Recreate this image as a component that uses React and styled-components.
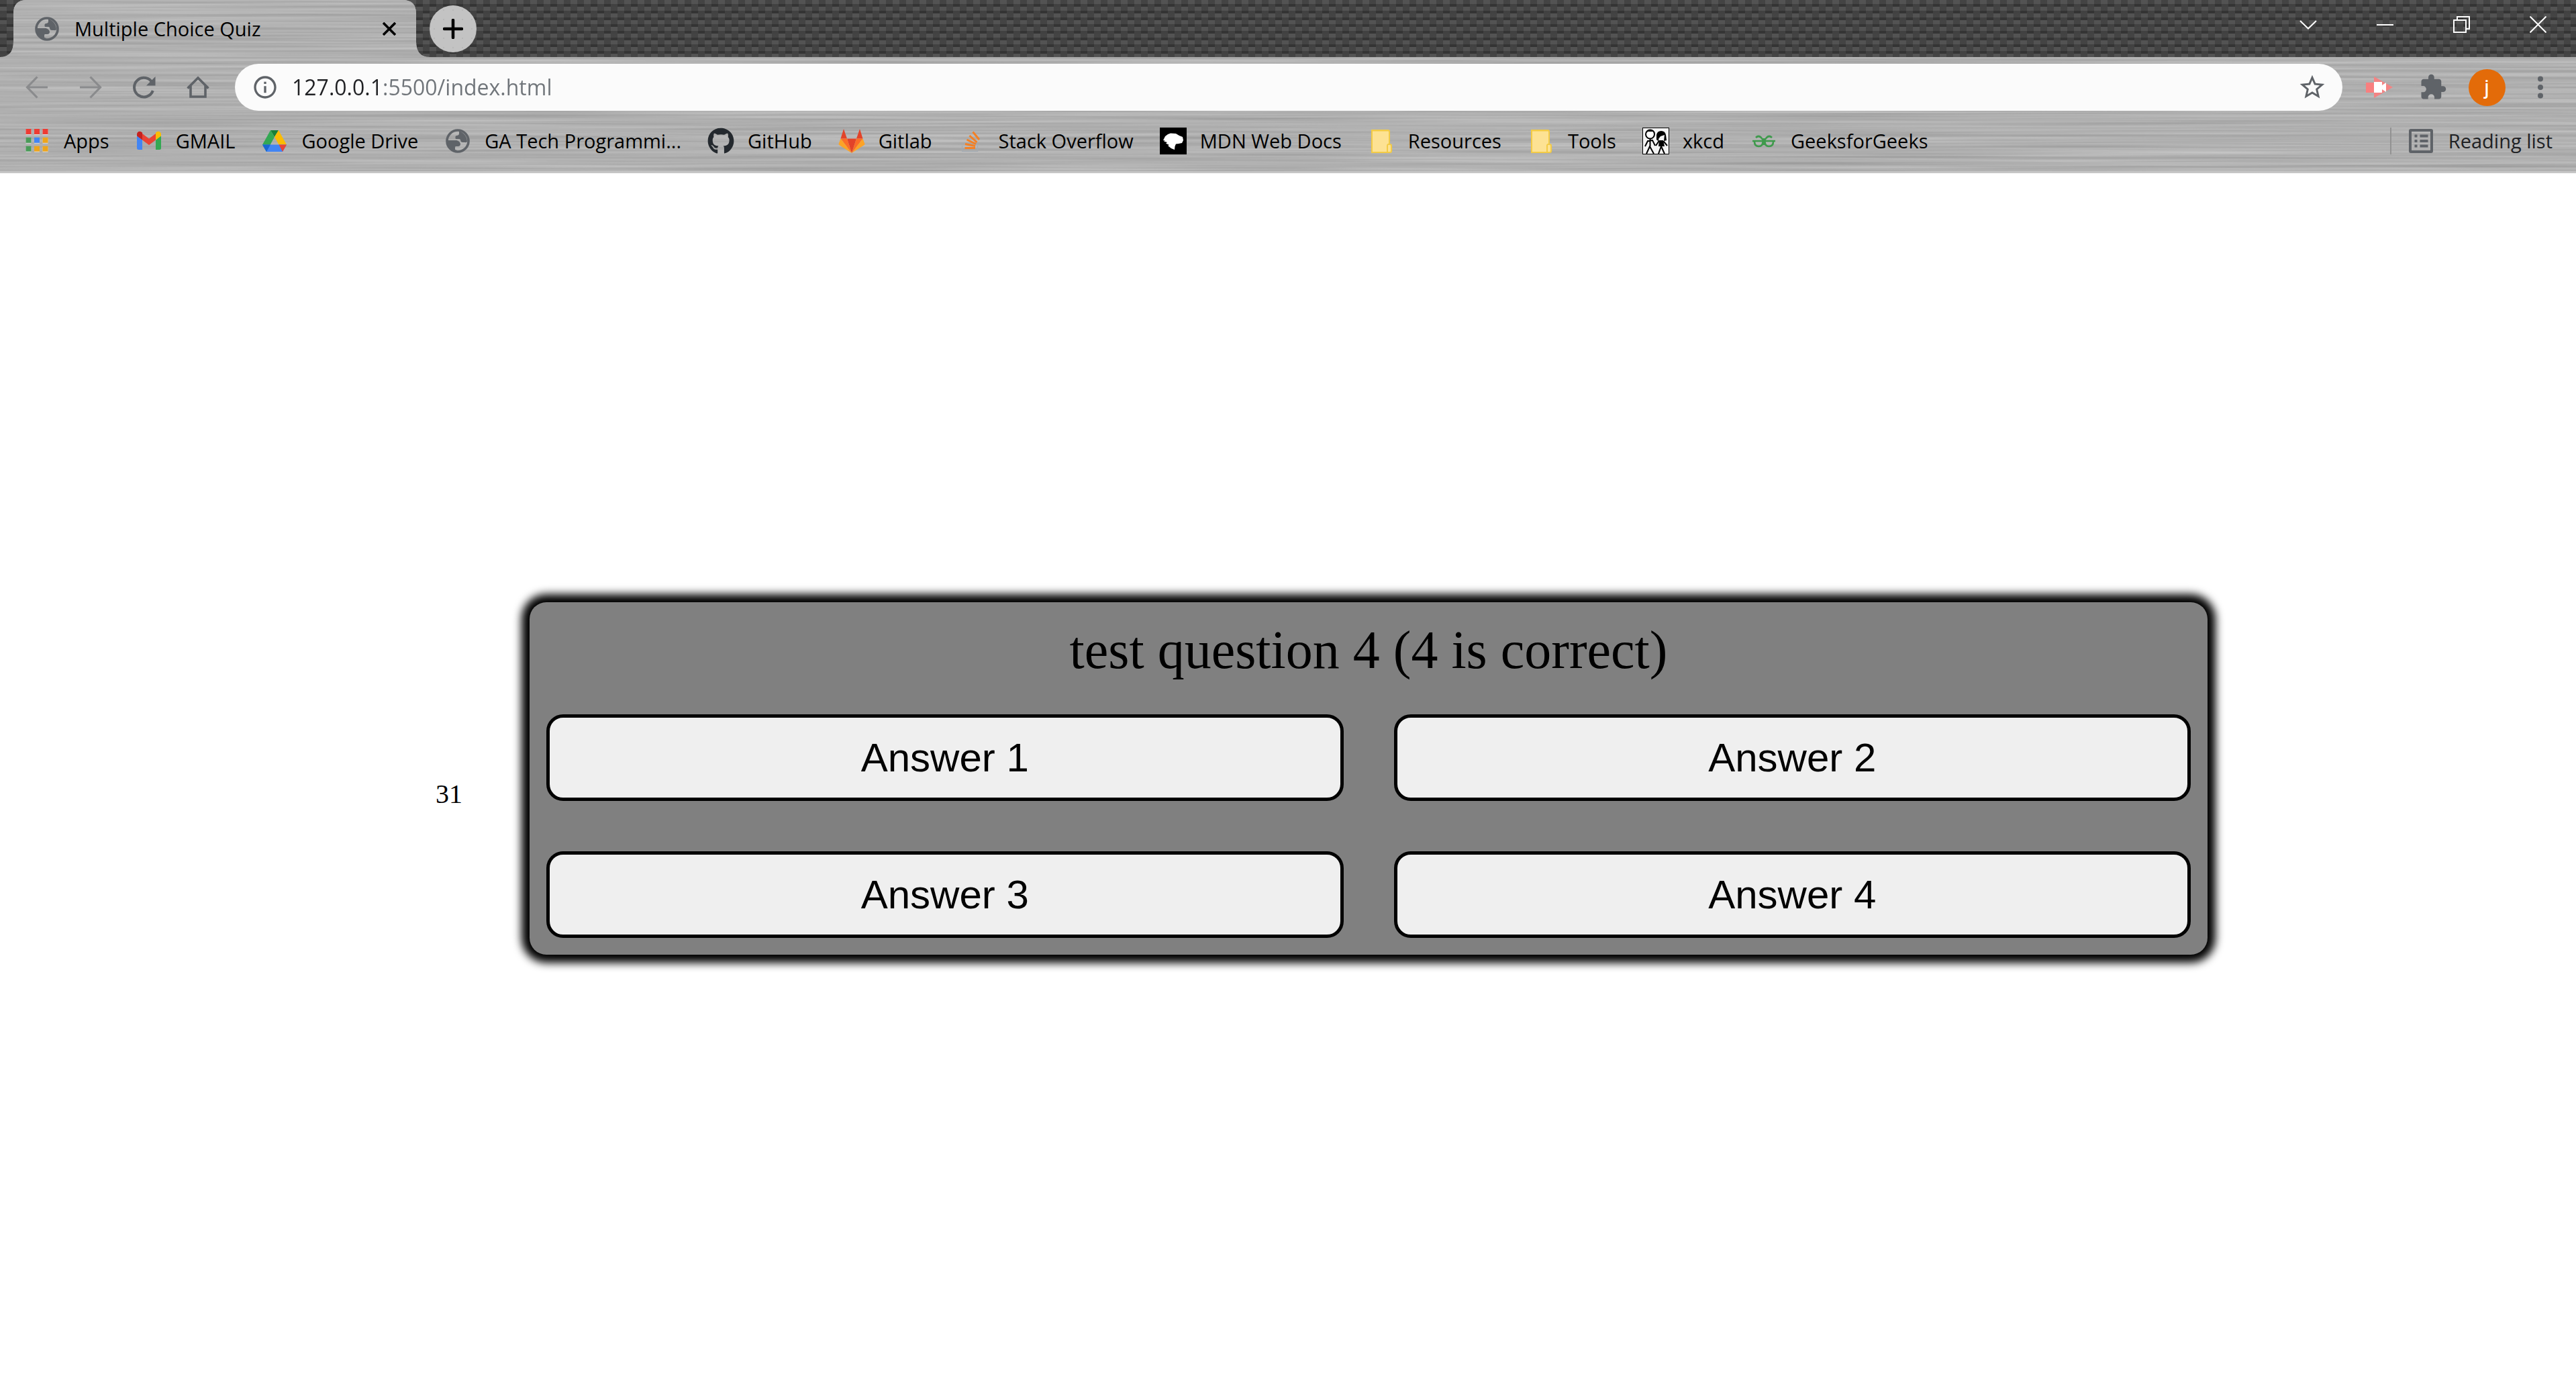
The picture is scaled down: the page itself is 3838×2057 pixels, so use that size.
import React from "react";
import styled, { createGlobalStyle } from "styled-components";
import { FaGithub } from "react-icons/fa";
import { MdExtension, MdStarBorder, MdInfoOutline } from "react-icons/md";

const ui = '"Open Sans", "Noto Sans", sans-serif';
const serif = '"Liberation Serif", "Times New Roman", serif';
const sans = '"Liberation Sans", Arial, sans-serif';

const GlobalStyle = createGlobalStyle`
  * { box-sizing: border-box; }
  body { margin: 0; background: #fff; font-family: ${ui}; }
  svg { display: block; flex: none; }
`;

const Window = styled.div`
  display: flex;
  flex-direction: column;
  min-height: 100vh;
`;

/* ---------- browser chrome ---------- */

const Chrome = styled.header`
  position: relative;
  z-index: 0;
  overflow: hidden;
  background: #aeaeae;
  border-bottom: 3px solid #c6c6c6;
`;

const Metal = styled.svg`
  position: absolute;
  inset: 0;
  width: 100%;
  height: 100%;
  z-index: -1;
`;

const Strip = styled.div`
  display: flex;
  align-items: center;
  height: 85px;
  background:
    repeating-linear-gradient(rgba(255, 255, 255, 0.04) 0 6px, rgba(0, 0, 0, 0.14) 6px 10px),
    repeating-conic-gradient(#4c4c4c 0 25%, #3c3c3c 0 50%) 0 0 / 20px 20px;
`;

const Tab = styled.div`
  position: relative;
  z-index: 0;
  display: flex;
  align-items: center;
  gap: 23px;
  width: 640px;
  height: 85px;
  padding: 0 50px 0 52px;
  background: #aeaeae;
  clip-path: path("M0 85 Q20 85 20 62 V20 Q20 0 40 0 H600 Q620 0 620 20 V62 Q620 85 640 85 Z");
`;

const TabTitle = styled.span`
  flex: 1;
  font-size: 29px;
  line-height: 40px;
  color: #000;
`;

const PlainButton = styled.button`
  display: flex;
  align-items: center;
  justify-content: center;
  padding: 0;
  border: 0;
  background: none;
  color: #5f6368;
`;

const NewTab = styled(PlainButton)`
  width: 70px;
  height: 70px;
  border-radius: 50%;
  background: radial-gradient(#b8b8b8 10%, transparent 16%) 0 0 / 14px 14px #c3c3c3;
`;

const Caption = styled.div`
  display: flex;
  margin-left: auto;
  height: 85px;
  padding-bottom: 12px;
`;

const CaptionButton = styled(PlainButton)`
  width: 114px;
`;

const Toolbar = styled.div`
  display: flex;
  align-items: center;
  padding: 10px 13px 10px 15px;
`;

const ToolButton = styled(PlainButton)`
  width: 80px;
  height: 70px;
`;

const Omnibox = styled.div`
  flex: 1;
  display: flex;
  align-items: center;
  height: 70px;
  margin: 0 15px;
  padding: 0 23px 0 25px;
  border-radius: 35px;
  background: #fbfbfb;
  color: #5f6368;
`;

const Address = styled.input`
  flex: 1;
  min-width: 0;
  margin: 0 20px;
  padding: 0;
  border: 0;
  outline: 0;
  font-family: ${ui};
  font-size: 32px;
  line-height: 48px;
  background: linear-gradient(to right, #202124 134px, #70757a 134px);
  background-clip: text;
  -webkit-text-fill-color: transparent;
`;

const Avatar = styled.span`
  display: flex;
  align-items: center;
  justify-content: center;
  width: 55px;
  height: 55px;
  border-radius: 50%;
  background: #e36b09;
  color: #fff;
  font-family: Roboto, sans-serif;
  font-size: 32px;
  line-height: 40px;
`;

const Bookmarks = styled.nav`
  display: flex;
  align-items: center;
  gap: 39px;
  height: 80px;
  padding: 0 35px 10px;
`;

const Bookmark = styled.a`
  display: flex;
  align-items: center;
  gap: 20px;
  color: #000;
  font-size: 29px;
  line-height: 40px;
  white-space: nowrap;
  text-decoration: none;
`;

const ReadingList = styled(PlainButton)`
  gap: 23px;
  height: 40px;
  margin-left: auto;
  padding-left: 26px;
  border-left: 2px solid #929292;
  font-family: ${ui};
  font-size: 29px;
  line-height: 40px;
`;

const ReadingLabel = styled.span`
  color: #202124;
`;

/* ---------- quiz page ---------- */

const Page = styled.main`
  flex: 1;
  display: flex;
  align-items: center;
  justify-content: center;
  padding-top: 3px;
`;

const Timer = styled.div`
  margin: 0 100px;
  padding-top: 48px;
  font-family: ${serif};
  font-size: 40px;
  line-height: 46px;
  color: #000;
`;

const Card = styled.section`
  flex: 0 1 2500px;
  display: flex;
  flex-direction: column;
  gap: 50px;
  padding: 25px;
  border-radius: 25px;
  background: #808080;
  box-shadow: 0 0 13px 12px #000;
`;

const Question = styled.h1`
  margin: 0;
  font-family: ${serif};
  font-size: 80px;
  font-weight: 400;
  line-height: 92px;
  text-align: center;
  color: #000;
`;

const Answers = styled.div`
  display: grid;
  grid-template-columns: 1fr 1fr;
  gap: 75px;
`;

const Answer = styled.button`
  padding: 25px;
  border: 5px solid #000;
  border-radius: 25px;
  background: #efefef;
  font-family: ${sans};
  font-size: 60px;
  line-height: 69px;
  color: #000;
`;

/* ---------- icons ---------- */

const MetalTexture = ({ id }) => (
  <Metal aria-hidden="true">
    <filter id={id} x="0" y="0" width="100%" height="100%" colorInterpolationFilters="sRGB">
      <feTurbulence type="fractalNoise" baseFrequency="0.002 0.24" numOctaves="3" seed="7" />
      <feColorMatrix values="0.2 0 0 0 0.59  0.2 0 0 0 0.59  0.2 0 0 0 0.59  0 0 0 0 1" />
    </filter>
    <rect width="100%" height="100%" filter={`url(#${id})`} />
  </Metal>
);

const Globe = ({ size = 36 }) => (
  <svg width={size} height={size} viewBox="0 0 36 36" fill="#5f6368">
    <circle cx="18" cy="18" r="16" fill="none" stroke="#5f6368" strokeWidth="3.6" />
    <path d="M20 3.5v3.5c0 2-1.500 3-3.500 3-1 0-2 .7-2 2v1.500c0 1 .7 1.500 1.600 1.500H20c1.500 0 2.200 1 2.200 2.300 0 2 1.400 2.700 3 2.700h3c1.500 0 2 .8 3.800-1A16 16 0 0 0 20 3.500z" />
    <path d="M2.500 17H15c3.500 0 7 2.500 7 5.500 0 2.500-1.500 3.500-3.500 3.500h-3c-1 0-1.500.6-1.500 1.500V30c0 1 .8 1.500 2.500 1.500L16 34A16 16 0 0 1 2.500 17z" />
  </svg>
);

const box = { width: 40, height: 40, viewBox: "0 0 40 40" };

const icons = {
  apps: (
    <svg {...box}>
      {["#ee3b33", "#ee3b33", "#ee3b33", "#4a9b58", "#4285f4", "#eda51c", "#4a9b58", "#eda51c", "#eda51c"].map((c, i) => (
        <g key={i}>
          <rect x={3.5 + (i % 3) * 12.5} y={3 + Math.floor(i / 3) * 12.8} width="8" height="8" fill="#ddd" />
          <rect x={3.5 + (i % 3) * 12.5} y={2 + Math.floor(i / 3) * 12.8} width="8" height="8" fill={c} />
        </g>
      ))}
    </svg>
  ),
  gmail: (
    <svg {...box}>
      <path d="M2 12l8 6.500V33H4.500A2.500 2.500 0 0 1 2 30.500z" fill="#4285f4" />
      <path d="M38 12l-8 6.500V33h5.500a2.500 2.500 0 0 0 2.500-2.500z" fill="#34a853" />
      <path d="M10 9l10 7.500L30 9v9.500L20 26l-10-7.500z" fill="#ea4335" />
      <path d="M2 12.500V10c0-4 4-5.500 7-3.300L10 7.500v11z" fill="#c5221f" />
      <path d="M38 12.500V10c0-4-4-5.500-7-3.300l-1 .8v11z" fill="#fbbc04" />
    </svg>
  ),
  drive: (
    <svg {...box}>
      <path d="M14 4h12l-6 10z" fill="#188038" />
      <path d="M14 4L2 25.500 8 36l12-22z" fill="#34a853" />
      <path d="M26 4l12 21.500H26.500L20 14z" fill="#fbbc04" />
      <path d="M2 25.500h36L32 36H8z" fill="#4285f4" />
      <path d="M2 25.500h12L8 36z" fill="#1967d2" />
      <path d="M26.500 25.500H38L32 36z" fill="#ea4335" />
    </svg>
  ),
  globe: (
    <svg {...box}>
      <g transform="translate(2 2)"><Globe /></g>
    </svg>
  ),
  github: <FaGithub size={40} color="#24292e" />,
  gitlab: (
    <svg {...box}>
      <path d="M8 2l5 14.500H3.500zM32 2l-5 14.500h9.500z" fill="#e24329" />
      <path d="M13 16.500h14L20 38z" fill="#e24329" />
      <path d="M3.500 16.500H13L20 38zM36.500 16.500H27L20 38z" fill="#fc6d26" />
      <path d="M3.500 16.500L.7 24c-.3.900 0 1.500.7 2L20 38zM36.500 16.500l2.800 7.500c.3.900 0 1.500-.7 2L20 38z" fill="#fca326" />
    </svg>
  ),
  stack: (
    <svg {...box}>
      <path d="M5.500 27v8.500h23V27" fill="none" stroke="#a3abb3" strokeWidth="1.200" />
      <path
        d="M9.500 30.500h15.500M10 24.500l15 3M12.500 18l13.500 6.500M16.500 12l11 10M21.500 6.500l9.500 11.500"
        fill="none"
        stroke="#f48024"
        strokeWidth="3"
      />
    </svg>
  ),
  mdn: (
    <svg {...box}>
      <rect width="40" height="40" fill="#000" />
      <path d="M5 19l3-6 4-3 4-1.500 8 .5 5 3 5 2 1 5-2 4-5 1-4 .5-1.500 3.500-.5 5-5-2-5-4 2-1-5-2.500 2-1.500-5-1.500 2-1z" fill="#fff" />
    </svg>
  ),
  folder: (
    <svg {...box}>
      <path d="M6 4h24a2 2 0 0 1 2 2v19h1a2 2 0 0 1 2 2v8a2 2 0 0 1-2 2H6z" fill="#fde293" stroke="#f3cb45" strokeWidth="2" />
      <path d="M6 4.500h25M29 36v-9a2 2 0 0 1 3-2" fill="none" stroke="#f3cb45" strokeWidth="2" />
    </svg>
  ),
  xkcd: (
    <svg {...box}>
      <rect x=".5" y=".5" width="39" height="39" fill="#f4f4f4" stroke="#000" />
      <g fill="none" stroke="#000" strokeWidth="2">
        <circle cx="11.500" cy="10" r="6.500" fill="#fff" />
        <path d="M11.500 17v11M4 28l4-8 7-1 4 8M6 39l5-11 6 11M28 20v9M20 27l4-6h8l5 6M24 39l4-11 5 11" />
      </g>
      <path d="M5 9q1-6 7-6t7 6l-3-3H8z" />
      <path d="M21 18V11q1-6 7-6t7 6l1 8-4 1 1-9-6 2-3 4 1 4z" />
      <path d="M25 19h6l2 9h-9z" />
    </svg>
  ),
  geeks: (
    <svg {...box} fill="none" stroke="#3f9a4c" strokeWidth="2.600">
      <path d="M8 15q4-4 8 0l4 5M32 15q-4-4-8 0l-4 5M3 20h34M6 21c0 5 3 7 6.500 7s6-2 6-7M21.500 21c0 5 2.500 7 6 7s6.500-2 6.500-7M20 16v10" />
    </svg>
  ),
};

const bookmarks = [
  ["apps", "Apps"],
  ["gmail", "GMAIL"],
  ["drive", "Google Drive"],
  ["globe", "GA Tech Programmi..."],
  ["github", "GitHub"],
  ["gitlab", "Gitlab"],
  ["stack", "Stack Overflow"],
  ["mdn", "MDN Web Docs"],
  ["folder", "Resources"],
  ["folder", "Tools"],
  ["xkcd", "xkcd"],
  ["geeks", "GeeksforGeeks"],
];

const Arrow = ({ back }) => (
  <svg width="34" height="34" viewBox="0 0 34 34" fill="none" stroke="#8a8b8d" strokeWidth="3.200">
    {back ? <path d="M33 17H3M17.500 1.500L2.500 17l15 15.500" /> : <path d="M1 17h30M16.500 1.500L31.500 17l-15 15.500" />}
  </svg>
);

const Reload = () => (
  <svg width="36" height="34" viewBox="0 0 36 34" fill="none">
    <path d="M30 10.500A14.300 14.300 0 1 0 30.800 22" stroke="#5f6368" strokeWidth="4" />
    <path d="M34.500 1v13.500H21z" fill="#5f6368" />
  </svg>
);

const Home = () => (
  <svg width="34" height="34" viewBox="0 0 34 34" fill="none" stroke="#5f6368" strokeWidth="3.600">
    <path d="M1.500 18.500L17 3l15.500 15.500M6 15v16h22V15" />
  </svg>
);

export default function App() {
  return (
    <Window>
      <GlobalStyle />
      <Chrome>
        <MetalTexture id="metal-bar" />
        <Strip>
          <Tab>
            <MetalTexture id="metal-tab" />
            <Globe />
            <TabTitle>Multiple Choice Quiz</TabTitle>
            <PlainButton aria-label="Close tab">
              <svg width="20" height="20" viewBox="0 0 20 20" stroke="#000" strokeWidth="3.600">
                <path d="M1 1l18 18M19 1L1 19" />
              </svg>
            </PlainButton>
          </Tab>
          <NewTab aria-label="New tab">
            <svg width="30" height="30" viewBox="0 0 30 30" stroke="#000" strokeWidth="4.500" strokeLinecap="round">
              <path d="M15 2v26M2 15h26" />
            </svg>
          </NewTab>
          <Caption>
            <CaptionButton aria-label="Search tabs">
              <svg width="26" height="14" viewBox="0 0 26 14" fill="none" stroke="#fff" strokeWidth="2">
                <path d="M1 1l12 11.500L25 1" />
              </svg>
            </CaptionButton>
            <CaptionButton aria-label="Minimize">
              <svg width="25" height="2"><rect width="25" height="2" fill="#fff" /></svg>
            </CaptionButton>
            <CaptionButton aria-label="Restore">
              <svg width="25" height="25" viewBox="0 0 25 25" fill="none" stroke="#fff" strokeWidth="2">
                <path d="M1 6h18v18H1zM6 6V1h18v18h-5" />
              </svg>
            </CaptionButton>
            <CaptionButton aria-label="Close">
              <svg width="25" height="25" viewBox="0 0 25 25" stroke="#fff" strokeWidth="2">
                <path d="M.5.5l24 24M24.500.5l-24 24" />
              </svg>
            </CaptionButton>
          </Caption>
        </Strip>
        <Toolbar>
          <ToolButton aria-label="Back"><Arrow back /></ToolButton>
          <ToolButton aria-label="Forward"><Arrow /></ToolButton>
          <ToolButton aria-label="Reload"><Reload /></ToolButton>
          <ToolButton aria-label="Home"><Home /></ToolButton>
          <Omnibox>
            <MdInfoOutline size={40} />
            <Address aria-label="Address" defaultValue="127.0.0.1:5500/index.html" />
            <PlainButton aria-label="Bookmark this page"><MdStarBorder size={44} /></PlainButton>
          </Omnibox>
          <ToolButton aria-label="Screen recorder">
            <svg width="40" height="34" viewBox="0 0 40 34">
              <path d="M12 1l28 16-28 16z" fill="#f38484" />
              <path d="M0 10h12v15H0z" fill="#f87f7f" />
              <path d="M12 9h12v5l6-4v14l-6-4v5H12z" fill="#fff" />
            </svg>
          </ToolButton>
          <ToolButton aria-label="Extensions"><MdExtension size={42} /></ToolButton>
          <ToolButton aria-label="Profile"><Avatar>j</Avatar></ToolButton>
          <ToolButton aria-label="Menu">
            <svg width="8" height="34" viewBox="0 0 8 34" fill="#5f6368">
              <circle cx="4" cy="4.500" r="4" /><circle cx="4" cy="17" r="4" /><circle cx="4" cy="29.500" r="4" />
            </svg>
          </ToolButton>
        </Toolbar>
        <Bookmarks>
          {bookmarks.map(([icon, label]) => (
            <Bookmark key={label} href="#">
              {icons[icon]}
              {label}
            </Bookmark>
          ))}
          <ReadingList>
            <svg width="36" height="36" viewBox="0 0 36 36" fill="none" stroke="#5f6368" strokeWidth="4">
              <rect x="2" y="2" width="32" height="32" rx="1" />
              <path d="M8.500 10.500h4M16.500 10.500h12M8.500 18h4M16.500 18h12M8.500 25.500h4M16.500 25.500h12" />
            </svg>
            <ReadingLabel>Reading list</ReadingLabel>
          </ReadingList>
        </Bookmarks>
      </Chrome>
      <Page>
        <Timer>31</Timer>
        <Card>
          <Question>test question 4 (4 is correct)</Question>
          <Answers>
            {[1, 2, 3, 4].map((n) => (
              <Answer key={n}>Answer {n}</Answer>
            ))}
          </Answers>
        </Card>
      </Page>
    </Window>
  );
}
